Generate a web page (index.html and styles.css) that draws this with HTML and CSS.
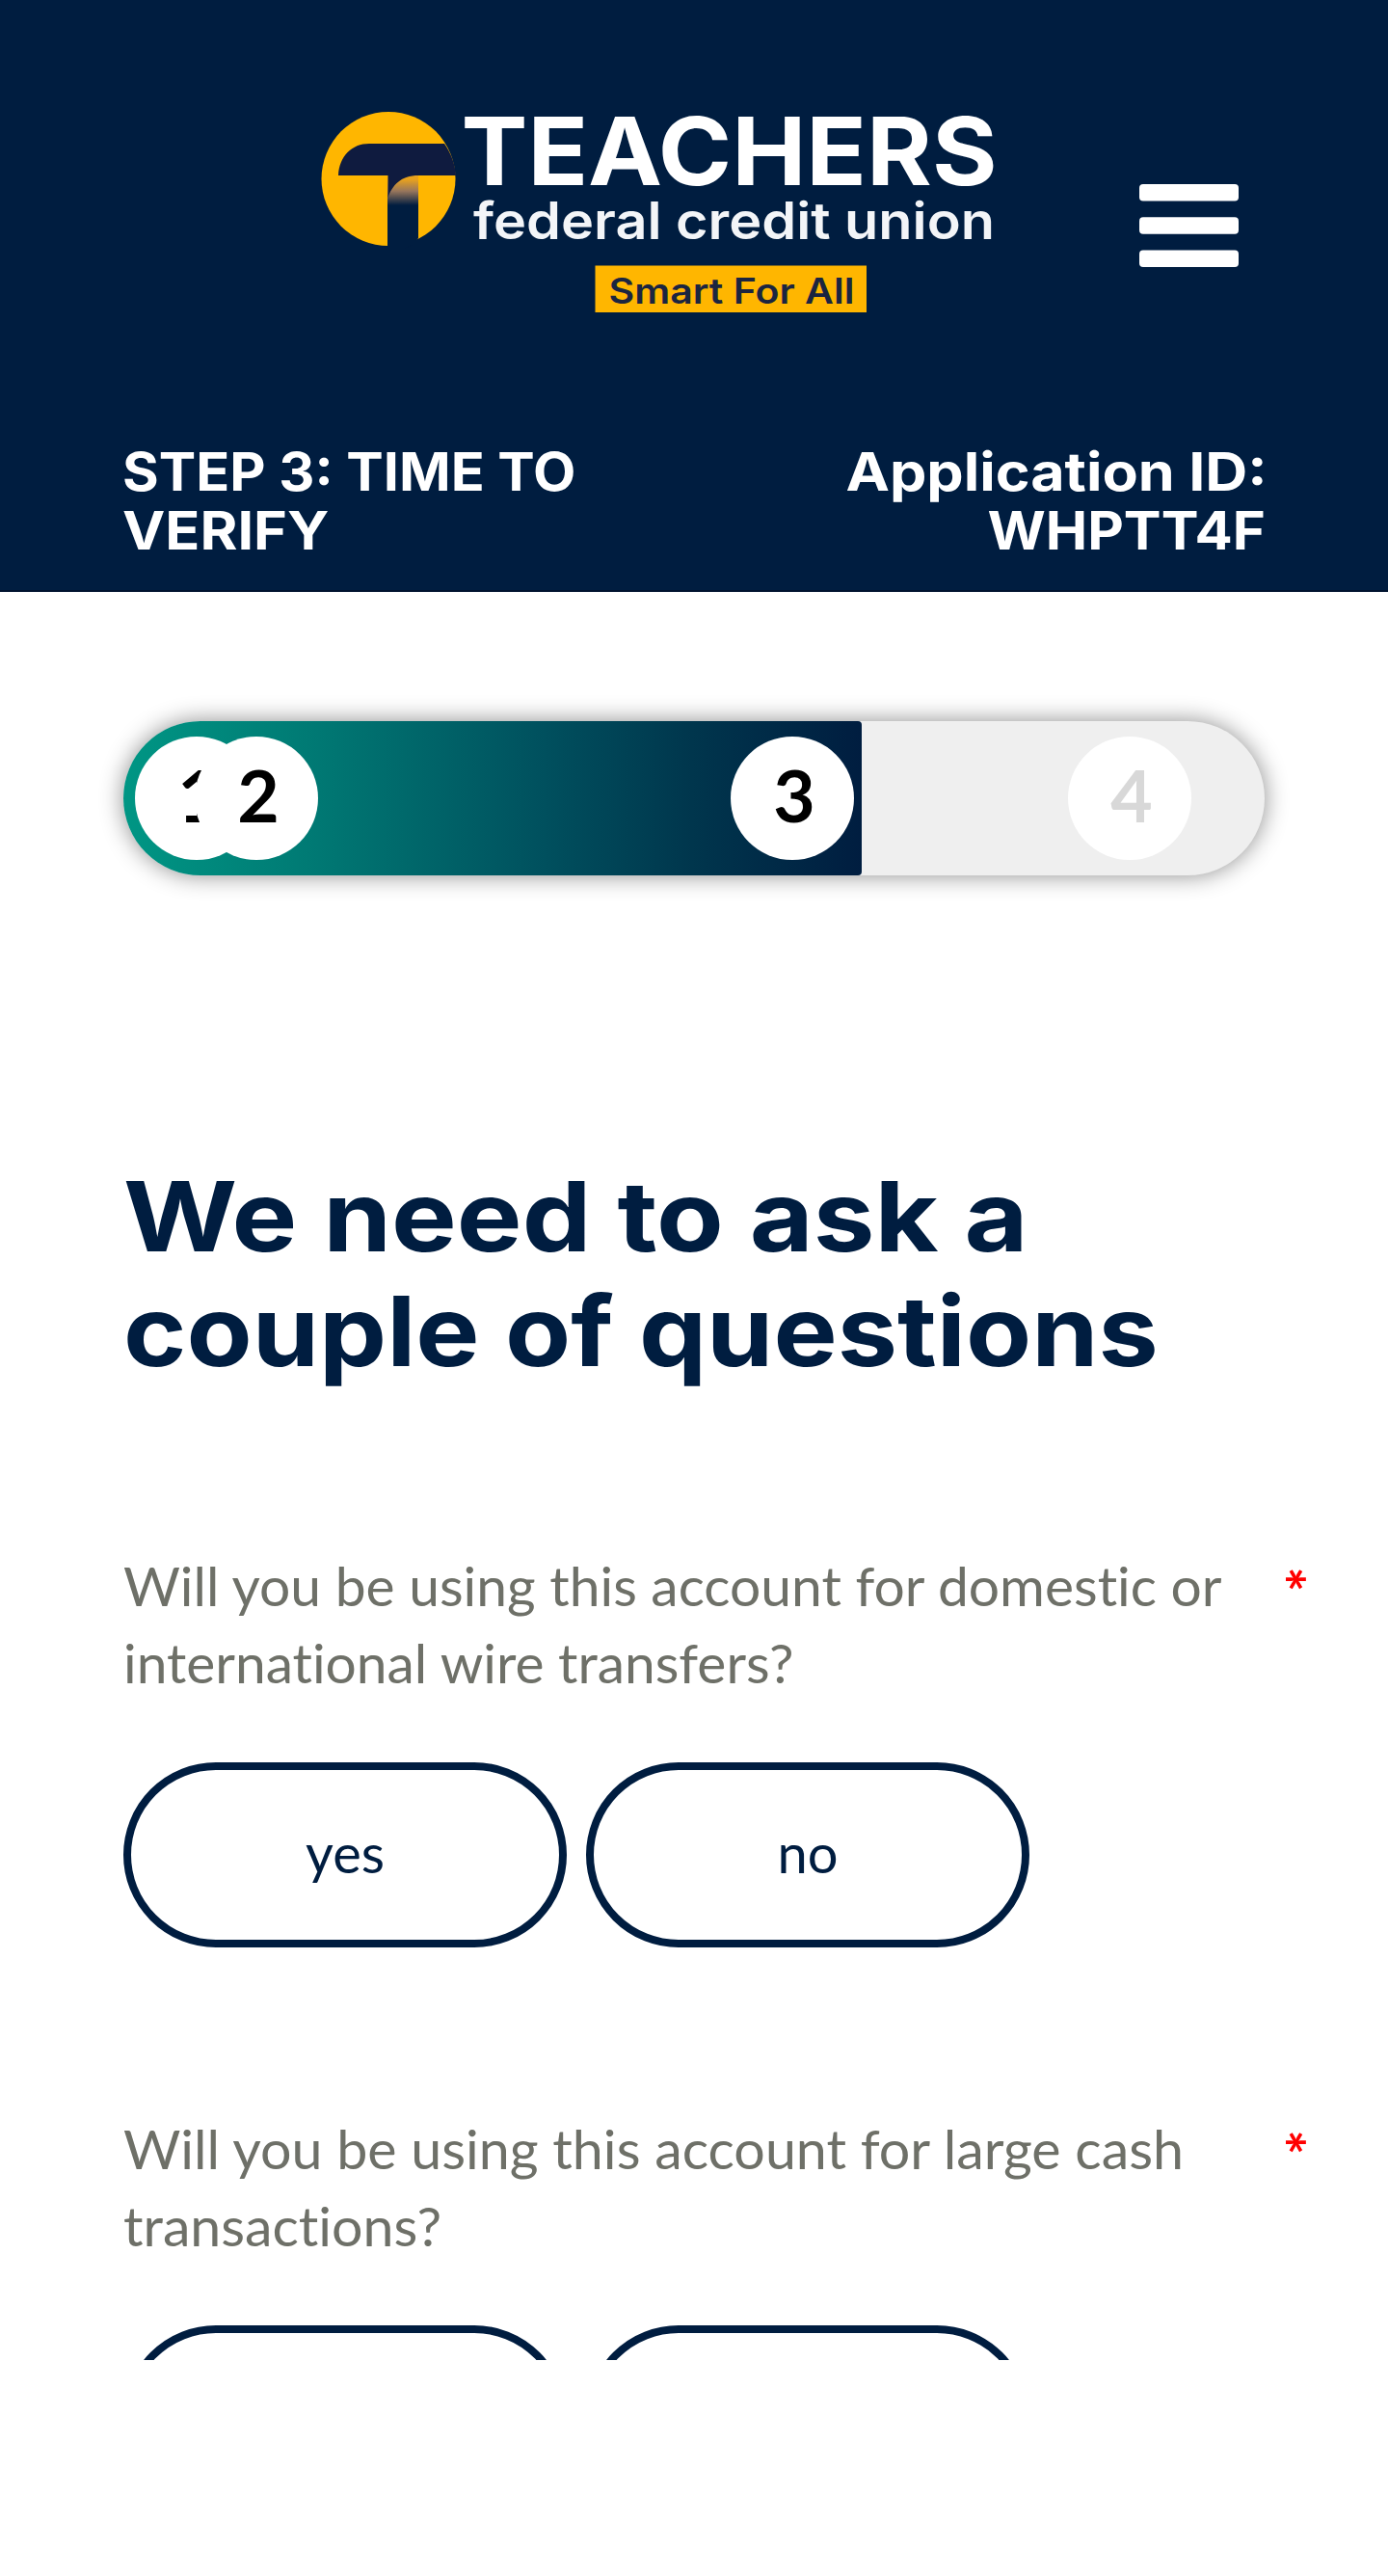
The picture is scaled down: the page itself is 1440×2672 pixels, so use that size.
FILE: index.html
```
<!DOCTYPE html>
<html lang="en">
<head>
<meta charset="utf-8">
<title>Teachers Federal Credit Union - Verify</title>
<link rel="stylesheet" href="styles.css">
</head>
<body>
<header class="header">
  <div class="brand-row">
    <svg class="logo" width="700" height="208" viewBox="0 0 700 208" role="img" aria-label="Teachers federal credit union, Smart For All">
      <defs>
        <linearGradient id="fade" x1="0" y1="70" x2="0" y2="97" gradientUnits="userSpaceOnUse">
          <stop offset="0" stop-color="#e9a21d"/>
          <stop offset=".45" stop-color="#98765c"/>
          <stop offset="1" stop-color="#001d40"/>
        </linearGradient>
      </defs>
      <circle cx="69" cy="69.500" r="69.500" fill="#ffb600"/>
      <path d="M68 66H100V131Q94 140 84 142H68Z" fill="#001d40"/>
      <path d="M68 64H100V98H68Z" fill="url(#fade)"/>
      <path d="M17 66C18 46 31 33 49 33H127C134 43 138 54 139 66H100C82 66 73 76 68.500 89V66Z" fill="#0f1b3f"/>
      <text class="logo-name" x="144.500" y="75.500" textLength="556" lengthAdjust="spacingAndGlyphs">TEACHERS</text>
      <text class="logo-sub" x="157" y="132" textLength="541" lengthAdjust="spacingAndGlyphs">federal credit union</text>
      <rect x="283.500" y="159.500" width="281.500" height="48.500" fill="#ffb600"/>
      <text class="logo-tag" x="297.500" y="199" textLength="255" lengthAdjust="spacingAndGlyphs">Smart For All</text>
    </svg>
    <svg class="menu" width="103" height="86" viewBox="0 0 103 86" role="img" aria-label="Menu">
      <rect width="103" height="17.500" rx="4"/>
      <rect y="34.300" width="103" height="17.500" rx="4"/>
      <rect y="68.500" width="103" height="17.500" rx="4"/>
    </svg>
  </div>
  <div class="title-row">
    <div class="step"><span class="line step-a">STEP 3: TIME TO</span><span class="line step-b">VERIFY</span></div>
    <div class="app-id"><span class="line app-a">Application ID:</span><span class="line app-b">WHPTT4F</span></div>
  </div>
</header>
<main class="content">
  <div class="progress">
    <div class="fill">
      <span class="dot">1</span><span class="dot second">2</span><span class="dot third">3</span>
    </div>
    <span class="dot next">4</span>
  </div>
  <h1 class="heading"><span class="line head-a">We need to ask a</span><span class="line head-b">couple of questions</span></h1>
  <section class="question">
    <div class="label">
      <div><span class="line q1-a">Will you be using this account for domestic or</span><span class="line q1-b">international wire transfers?</span></div>
      <span class="required">*</span>
    </div>
    <div class="choices"><button class="choice">yes</button><button class="choice">no</button></div>
  </section>
  <section class="question">
    <div class="label">
      <div><span class="line q2-a">Will you be using this account for large cash</span><span class="line q2-b">transactions?</span></div>
      <span class="required">*</span>
    </div>
    <div class="choices"><button class="choice" aria-label="yes"></button><button class="choice" aria-label="no"></button></div>
  </section>
</main>
</body>
</html>
```
FILE: styles.css
```
* { box-sizing: border-box; }
body {
  margin: 0;
  width: 1440px;
  height: 2672px;
  background: #fff;
  overflow: hidden;
}
.header {
  height: 614px;
  padding: 116px 127px 0;
  background: #001d40;
  border-bottom: 2px solid #00132f;
  color: #fff;
}
.brand-row {
  display: flex;
  align-items: flex-start;
  height: 343px;
  padding-left: 207px;
}
.logo { flex: none; overflow: visible; font-family: Inter, sans-serif; }
.logo-name { font-size: 98px; font-weight: 700; fill: #fff; }
.logo-sub { font-size: 53px; font-weight: 600; fill: #f3f5f8; }
.logo-tag { font-size: 37px; font-weight: 600; fill: #1b2540; }
.menu { flex: none; margin: 75px 0 0 148px; fill: #fff; }
.title-row {
  display: flex;
  justify-content: space-between;
  font: 700 55px/61px Inter, sans-serif;
}
.line {
  display: block;
  width: max-content;
  white-space: nowrap;
  transform-origin: 0 50%;
}
.step-a { transform: scaleX(1.048); }
.step-b { transform: scaleX(1.08); }
.app-id .line { margin-left: auto; transform-origin: 100% 50%; }
.app-id .app-a { transform: translateX(2px) scaleX(1.108); }
.app-id .app-b { transform: scaleX(1.057); }

.content {
  height: 1834px;
  padding: 134px 48px 0 128px;
  overflow: hidden;
}
.progress {
  display: flex;
  align-items: center;
  width: 1184px;
  height: 160px;
  border-radius: 80px;
  background: #efefef;
  box-shadow: 0 0 24px rgba(0, 0, 0, .45);
}
.fill {
  display: flex;
  align-items: center;
  width: 766px;
  height: 160px;
  padding: 0 8px 0 12px;
  border-radius: 80px 4px 4px 80px;
  background: linear-gradient(90deg, #009684 0%, #007a74 25%, #00505e 57%, #00364d 77%, #001d40 100%);
}
.dot {
  flex: none;
  width: 128px;
  height: 128px;
  padding-left: 4px;
  border-radius: 50%;
  background: #fff;
  color: #000;
  font: 700 75px/120px Lato, sans-serif;
  text-align: center;
}
.second { margin-left: -66px; }
.third { margin-left: auto; }
.next { margin-left: 214px; color: #d8d8d8; }

.heading {
  margin: 294px 0 165px;
  color: #001d40;
  font: 700 101px/119px Inter, sans-serif;
}
.head-a { transform: scaleX(1.127); }
.head-b { transform: scaleX(1.102); }

.question { margin-bottom: 169px; }
.label {
  display: flex;
  justify-content: space-between;
  padding-right: 47px;
  color: #6e7068;
  font: 400 56px/80px Lato, sans-serif;
  font-variant-ligatures: none;
}
.q1-a { transform: scaleX(1.017); }
.q1-b { transform: scaleX(1.0155); }
.q2-a { transform: scaleX(1.024); }
.q2-b { transform: scaleX(1.022); }
.required {
  width: 26px;
  height: 66px;
  color: #f00;
  font-size: 62px;
  font-weight: 700;
  line-height: 66px;
  text-align: center;
  transform: rotate(90deg);
}
.choices {
  display: flex;
  gap: 20px;
  margin-top: 63px;
}
.choice {
  width: 460px;
  height: 192px;
  padding: 0 0 4px;
  border: 8px solid #001d40;
  border-radius: 96px;
  background: #fff;
  color: #001d40;
  font: 400 56px/80px Lato, sans-serif;
}
```
